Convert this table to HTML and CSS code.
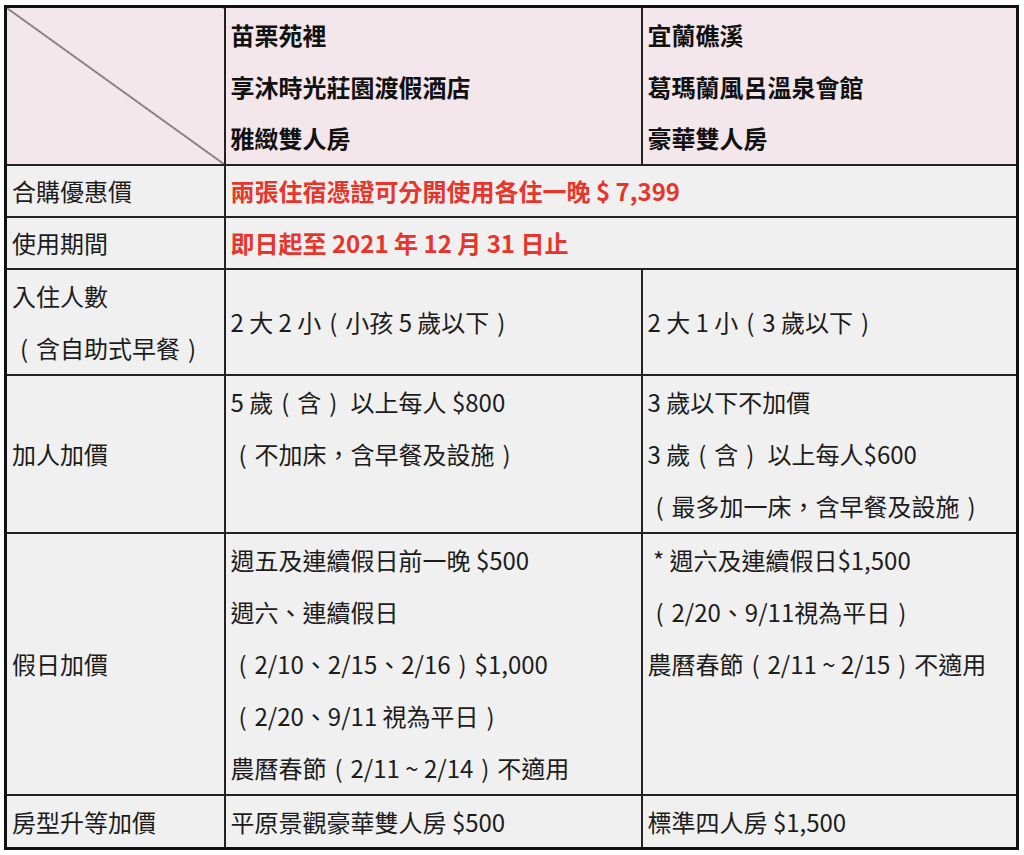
FILE: index.html
```html
<!DOCTYPE html>
<html lang="zh-Hant">
<head>
<meta charset="utf-8">
<title>住宿方案</title>
<link rel="stylesheet" href="styles.css">
</head>
<body>
<table class="plan">
  <colgroup>
    <col class="c1">
    <col class="c2">
    <col class="c3">
  </colgroup>
  <tr class="head">
    <td class="diag"></td>
    <td class="hotel">苗栗苑裡<br>享沐時光莊園渡假酒店<br>雅緻雙人房</td>
    <td class="hotel">宜蘭礁溪<br>葛瑪蘭風呂溫泉會館<br>豪華雙人房</td>
  </tr>
  <tr class="single">
    <td class="label">合購優惠價</td>
    <td class="red" colspan="2">兩張住宿憑證可分開使用各住一晚 $ 7,399</td>
  </tr>
  <tr class="single">
    <td class="label">使用期間</td>
    <td class="red" colspan="2">即日起至 2021 年 12 月 31 日止</td>
  </tr>
  <tr>
    <td class="label top">入住人數<br><span class="p">(</span>含自助式早餐<span class="p">)</span></td>
    <td>2 大 2 小<span class="p">(</span>小孩 5 歲以下<span class="p">)</span></td>
    <td>2 大 1 小<span class="p">(</span>3 歲以下<span class="p">)</span></td>
  </tr>
  <tr>
    <td class="label">加人加價</td>
    <td class="top">5 歲<span class="p">(</span>含<span class="p">)</span> 以上每人 $800<br><span class="p">(</span>不加床<span class="cm">，</span>含早餐及設施<span class="p">)</span></td>
    <td class="top">3 歲以下不加價<br>3 歲<span class="p">(</span>含<span class="p">)</span> 以上每人$600<br><span class="p">(</span>最多加一床<span class="cm">，</span>含早餐及設施<span class="p">)</span></td>
  </tr>
  <tr>
    <td class="label">假日加價</td>
    <td class="top">週五及連續假日前一晚 $500<br>週六、連續假日<br><span class="p">(</span>2/10、2/15、2/16<span class="p">)</span>$1,000<br><span class="p">(</span>2/20、9/11 視為平日<span class="p">)</span><br>農曆春節<span class="p">(</span>2/11 ~ 2/14<span class="p">)</span>不適用</td>
    <td class="top">&nbsp;* 週六及連續假日$1,500<br><span class="p">(</span>2/20、9/11視為平日<span class="p">)</span><br>農曆春節<span class="p">(</span>2/11 ~ 2/15<span class="p">)</span>不適用</td>
  </tr>
  <tr class="last">
    <td class="label">房型升等加價</td>
    <td>平原景觀豪華雙人房 $500</td>
    <td>標準四人房 $1,500</td>
  </tr>
</table>
</body>
</html>
```
FILE: styles.css
```css
html, body {
  margin: 0;
  padding: 0;
  background: #ffffff;
}

body {
  padding: 5px 0 0 4px;
  font-family: "Noto Sans CJK TC", sans-serif;
  color: #1c1c1c;
}

.plan {
  border-collapse: collapse;
  table-layout: fixed;
  width: 1012px;
  border: 3px solid #111;
  background: #f0f0f0;
  font-size: 24px;
}

.c1 { width: 219px; }
.c2 { width: 417px; }
.c3 { width: 376px; }

.plan td {
  border: 2px solid #222;
  padding: 0 4px 0 5px;
  line-height: 52px;
  vertical-align: middle;
  white-space: nowrap;
}

.plan td.top {
  vertical-align: top;
}

.head td {
  background: #f3e7eb;
  padding-top: 1px;
  line-height: 51.5px;
}

.hotel {
  font-weight: 700;
  vertical-align: top;
  color: #111;
}

.diag {
  background: linear-gradient(to top right,
    #f3e7eb calc(50% - 1px),
    #222 50%,
    #f3e7eb calc(50% + 1px)) !important;
}

.single td {
  line-height: 50px;
}

.last td {
  line-height: 51px;
}

.red {
  color: #e8352c;
  font-weight: 700;
}

.p {
  display: inline-block;
  width: 1em;
  text-align: center;
}

.cm {
  display: inline-block;
  width: 1em;
  text-align: center;
}
```
